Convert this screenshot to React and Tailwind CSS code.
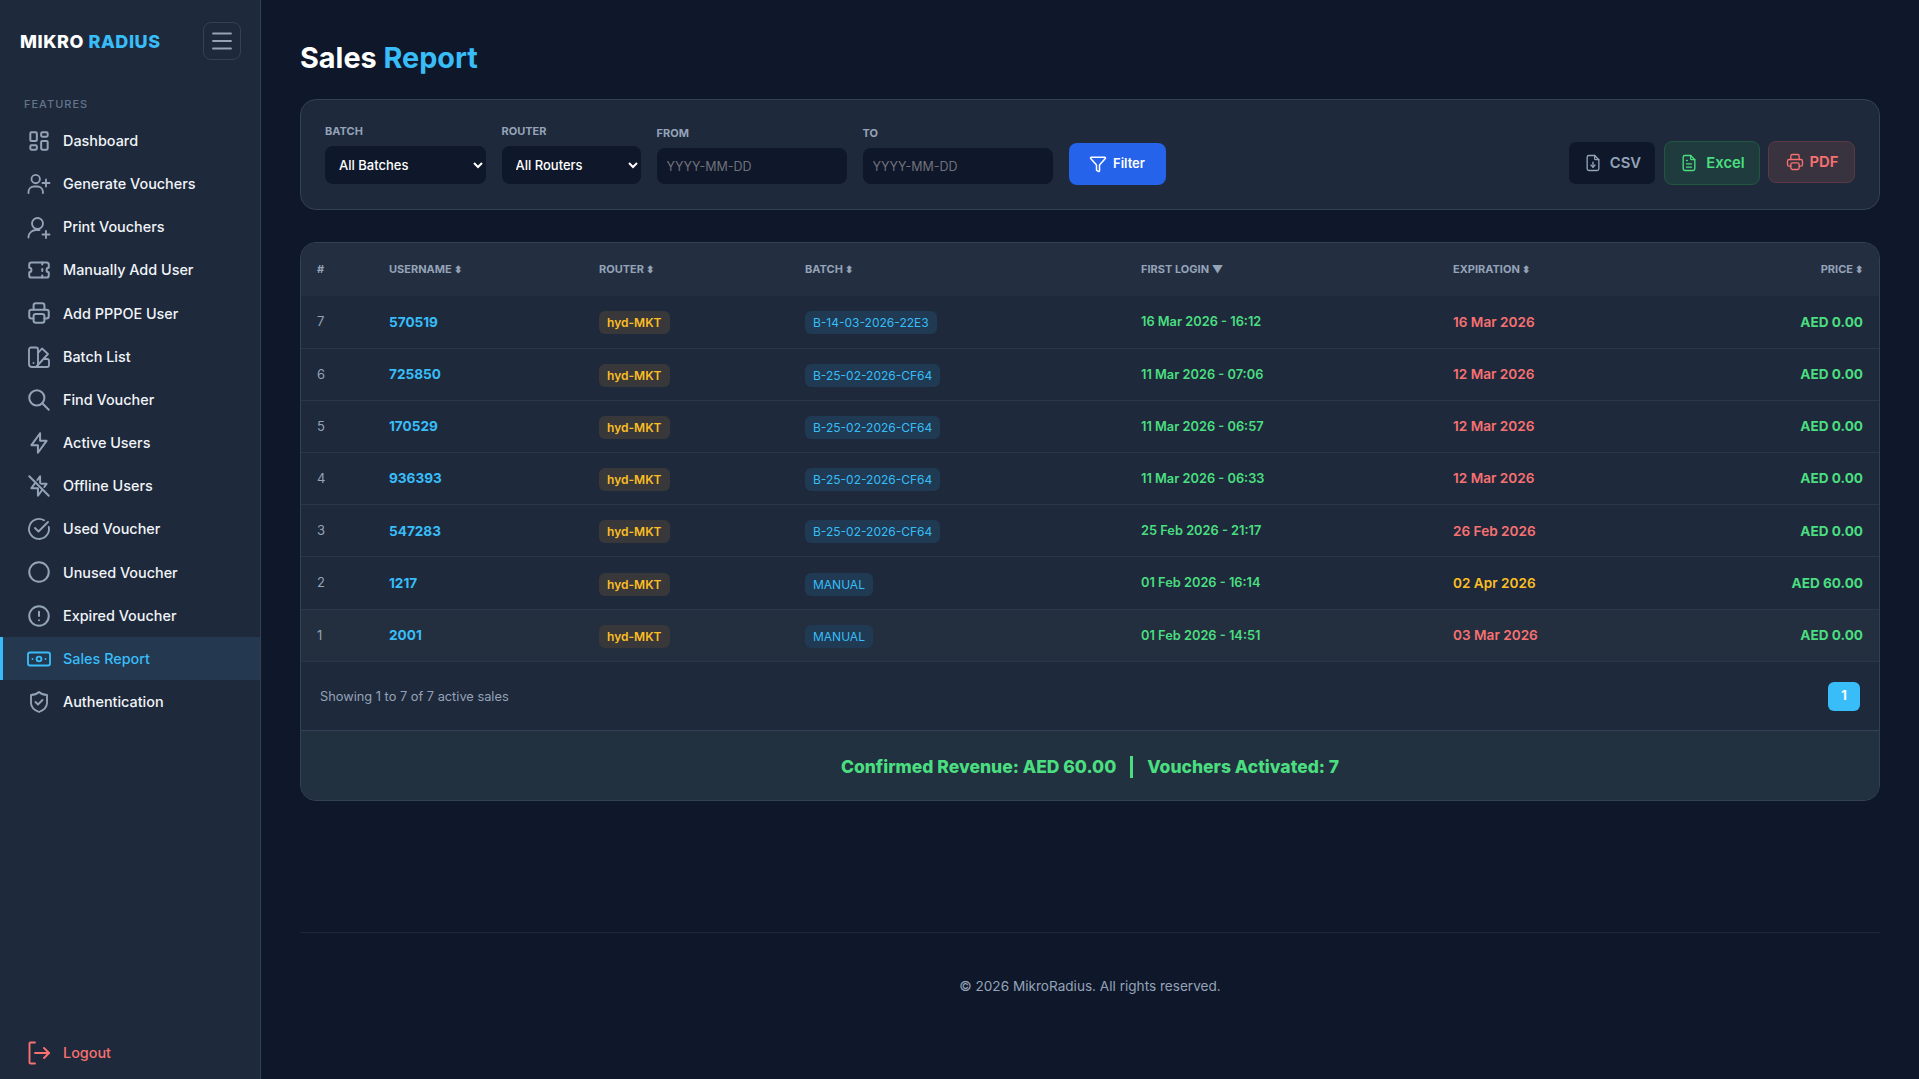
import React from 'react';
import {
  TbLayoutDashboard, TbTicket, TbPrinter, TbSearch, TbBolt, TbBoltOff,
  TbCircle, TbAlertCircle, TbFileDownload, TbFileText,
} from 'react-icons/tb';
import { Filter } from 'lucide-react';

// hand drawn icons, 24 unit paths inside a 26 unit box so they line up with the tabler ones
function Glyph({ children, ...props }) {
  return (
    <svg viewBox="-1 -1 26 26" fill="none" stroke="currentColor" strokeWidth="1.9" strokeLinecap="round" strokeLinejoin="round" {...props}>
      {children}
    </svg>
  );
}

const GenerateIcon = (props) => (
  <Glyph {...props}>
    <circle cx="8.7" cy="7" r="4.2" />
    <path d="M1.5 21v-1.5a5.5 5.5 0 0 1 5.5-5h3.4a5.5 5.5 0 0 1 5.5 5V21" />
    <path d="M15.5 11h7M19 7.5v7" />
  </Glyph>
);

const PrintIcon = (props) => (
  <Glyph {...props}>
    <circle cx="10.5" cy="8.5" r="5.5" />
    <path d="M1.5 22.5v-1a7.5 7.5 0 0 1 7.5-6.5h3.5" />
    <path d="M15.5 19.5h7M19 16v7" />
  </Glyph>
);

const BatchIcon = (props) => (
  <Glyph {...props}>
    <path d="M2 4.5a2 2 0 0 1 2-2h5a2 2 0 0 1 2 2v15.5a2 2 0 0 1-2 2H5a3 3 0 0 1-3-3z" />
    <path d="M11 8l4-4.5 6 5.5-12 13" />
    <path d="M17 14h3a2 2 0 0 1 2 2v4a2 2 0 0 1-2 2H8" />
    <path d="M6.5 18v.01" />
  </Glyph>
);

const UsedIcon = (props) => (
  <Glyph {...props}>
    <path d="M21.8 10A10 10 0 1 1 17 3.3" />
    <path d="M8 11l3.5 3.5L21 5" />
  </Glyph>
);

const CashIcon = (props) => (
  <Glyph {...props}>
    <rect x="1" y="5.5" width="22" height="13" rx="2" />
    <circle cx="12" cy="12" r="2.4" />
    <path d="M5.5 12v.01M18.5 12v.01" />
  </Glyph>
);

const ShieldIcon = (props) => (
  <Glyph {...props}>
    <path d="M12 2a12 12 0 0 0 8 3v8c0 4-3 7-8 9-5-2-8-5-8-9V5a12 12 0 0 0 8-3z" />
    <path d="M8.5 12l2.5 2.5 4.5-4.5" />
  </Glyph>
);

const LogoutIcon = (props) => (
  <Glyph {...props}>
    <path d="M8 1.5H3.5a1 1 0 0 0-1 1v19a1 1 0 0 0 1 1H8" />
    <path d="M8 12h14" />
    <path d="M17 7l5 5-5 5" />
  </Glyph>
);

const MenuIcon = (props) => (
  <svg viewBox="0 0 24 24" fill="none" stroke="currentColor" strokeWidth="1.8" strokeLinecap="round" {...props}>
    <path d="M3 4.5h18M3 12h18M3 19.5h18" />
  </svg>
);

const navItems = [
  ['Dashboard', TbLayoutDashboard],
  ['Generate Vouchers', GenerateIcon],
  ['Print Vouchers', PrintIcon],
  ['Manually Add User', TbTicket],
  ['Add PPPOE User', TbPrinter],
  ['Batch List', BatchIcon],
  ['Find Voucher', TbSearch],
  ['Active Users', TbBolt],
  ['Offline Users', TbBoltOff],
  ['Used Voucher', UsedIcon],
  ['Unused Voucher', TbCircle],
  ['Expired Voucher', TbAlertCircle],
  ['Sales Report', CashIcon, true],
  ['Authentication', ShieldIcon],
];

const sales = [
  [7, '570519', 'B-14-03-2026-22E3', '16 Mar 2026 - 16:12', '16 Mar 2026', 'AED 0.00', 'text-[#f87171]'],
  [6, '725850', 'B-25-02-2026-CF64', '11 Mar 2026 - 07:06', '12 Mar 2026', 'AED 0.00', 'text-[#f87171]'],
  [5, '170529', 'B-25-02-2026-CF64', '11 Mar 2026 - 06:57', '12 Mar 2026', 'AED 0.00', 'text-[#f87171]'],
  [4, '936393', 'B-25-02-2026-CF64', '11 Mar 2026 - 06:33', '12 Mar 2026', 'AED 0.00', 'text-[#f87171]'],
  [3, '547283', 'B-25-02-2026-CF64', '25 Feb 2026 - 21:17', '26 Feb 2026', 'AED 0.00', 'text-[#f87171]'],
  [2, '1217', 'MANUAL', '01 Feb 2026 - 16:14', '02 Apr 2026', 'AED 60.00', 'text-[#fbbf24]'],
  [1, '2001', 'MANUAL', '01 Feb 2026 - 14:51', '03 Mar 2026', 'AED 0.00', 'text-[#f87171]'],
];

function Sort() {
  return <span className="ml-[2px] text-[10px] font-black">⬍</span>;
}

function Sidebar() {
  return (
    <aside className="w-[261px] shrink-0 h-[1079px] bg-[#1e293b] border-r border-[#334155] flex flex-col">
      <div className="flex items-center justify-between pl-5 pr-[19px] pt-[22px]">
        <span className="text-[18px] font-extrabold tracking-[0.55px] text-white">
          MIKRO <span className="text-[#38bdf8]">RADIUS</span>
        </span>
        <button className="w-[38px] h-[38px] flex items-center justify-center rounded-lg border border-[#334155] text-[#94a3b8]">
          <MenuIcon className="w-[24px] h-[24px]" />
        </button>
      </div>
      <div className="pl-6 mt-[36px] mb-[7px] text-[11px] leading-[16px] font-medium tracking-[1px] text-[#64748b]">FEATURES</div>
      <nav className="flex flex-col">
        {navItems.map(([label, Icon, active]) => (
          <a
            key={label}
            className={
              active
                ? 'h-[43.2px] flex items-center gap-[11px] pl-[23px] border-l-[3px] border-[#38bdf8] bg-[#243850] text-[#38bdf8] text-[14.4px] font-medium'
                : 'h-[43.2px] flex items-center gap-[11px] pl-[26px] text-[#f1f5f9] text-[14.4px] font-medium'
            }
          >
            <Icon strokeWidth={1.85} className={active ? 'w-[26px] h-[26px]' : 'w-[26px] h-[26px] text-[#94a3b8]'} />
            {label}
          </a>
        ))}
      </nav>
      <a className="mt-auto mb-[5px] h-[43px] flex items-center gap-[11px] pl-[26px] text-[#f87171] text-[14.4px] font-medium">
        <LogoutIcon className="w-[26px] h-[26px]" />
        Logout
      </a>
    </aside>
  );
}

function FilterBar() {
  return (
    <div className="mt-[21px] h-[111px] rounded-2xl border border-[#334155] bg-[#1e293b] pl-[24px] pr-[24px] flex items-start justify-between">
      <div className="flex items-end gap-4 pt-[23px]">
        <label className="block">
          <span className="block text-[11px] leading-[16px] font-bold text-[#94a3b8] mb-[7px]">BATCH</span>
          <select className="block w-[160.5px] h-[38px] rounded-lg bg-[#0f172a] text-white text-[13px] font-medium pl-[10px] pr-1 outline-none">
            <option>All Batches</option>
          </select>
        </label>
        <label className="block">
          <span className="block text-[11px] leading-[16px] font-bold text-[#94a3b8] mb-[7px]">ROUTER</span>
          <select className="block w-[139px] h-[38px] rounded-lg bg-[#0f172a] text-white text-[13px] font-medium pl-[10px] pr-1 outline-none">
            <option>All Routers</option>
          </select>
        </label>
        <label className="block">
          <span className="block text-[11px] leading-[16px] font-bold text-[#94a3b8] mb-[7px]">FROM</span>
          <input placeholder="YYYY-MM-DD" className="block w-[190px] h-[36px] rounded-lg bg-[#0f172a] text-white text-[12.5px] px-[10px] outline-none placeholder:text-[#71717a]" />
        </label>
        <label className="block">
          <span className="block text-[11px] leading-[16px] font-bold text-[#94a3b8] mb-[7px]">TO</span>
          <input placeholder="YYYY-MM-DD" className="block w-[190px] h-[36px] rounded-lg bg-[#0f172a] text-white text-[12.5px] px-[10px] outline-none placeholder:text-[#71717a]" />
        </label>
        <button className="w-[97px] h-[42px] rounded-lg bg-[#2563eb] text-white text-[13px] font-semibold flex items-center justify-center gap-[6px] -mb-[1px]">
          <Filter className="w-[18px] h-[18px]" />
          Filter
        </button>
      </div>
      <div className="flex items-start gap-[8px] pt-[41px]">
        <button className="w-[88px] h-[44px] rounded-lg border border-[#1e293b] bg-[#0f172a] text-[#94a3b8] text-[14.8px] font-semibold flex items-center justify-center gap-[7px]">
          <TbFileDownload className="w-[20px] h-[20px]" strokeWidth={1.6} />
          CSV
        </button>
        <button className="w-[96px] h-[44px] rounded-lg border border-[#22573f] bg-[#1f3b3e] text-[#4ade80] text-[14.8px] font-semibold flex items-center justify-center gap-[7px]">
          <TbFileText className="w-[20px] h-[20px]" strokeWidth={1.6} />
          Excel
        </button>
        <button className="w-[87px] h-[42px] rounded-lg border border-[#5b3a45] bg-[#38333f] text-[#f87171] text-[14.8px] font-semibold flex items-center justify-center gap-[5px]">
          <TbPrinter className="w-[20px] h-[20px]" strokeWidth={1.6} />
          PDF
        </button>
      </div>
    </div>
  );
}

function SalesTable() {
  return (
    <div className="mt-[32px] rounded-2xl border border-[#334155] bg-[#1e293b] overflow-hidden">
      <table className="w-full table-fixed border-collapse">
        <thead>
          <tr className="h-[53px] bg-[#232e40] text-[11px] font-bold text-[#94a3b8] text-left">
            <th className="w-[72px] pl-4 font-bold">#</th>
            <th className="w-[210px] pl-4 font-bold">USERNAME<Sort /></th>
            <th className="w-[206px] pl-4 font-bold">ROUTER<Sort /></th>
            <th className="w-[336px] pl-4 font-bold">BATCH<Sort /></th>
            <th className="w-[312px] pl-4 font-bold">FIRST LOGIN <span className="text-[11px]">▼</span></th>
            <th className="pl-4 font-bold">EXPIRATION<Sort /></th>
            <th className="w-[200px] pr-4 text-right font-bold">PRICE<Sort /></th>
          </tr>
        </thead>
        <tbody>
          {sales.map(([id, user, batch, first, exp, price, expColor], i) => (
            <tr key={id} className={i === 6 ? 'h-[52.5px] border-b border-[#2b3649] bg-[#232e3e]' : 'h-[52.2px] border-b border-[#2b3649]'}>
              <td className="pl-4 text-[13px] text-[#94a3b8]">{id}</td>
              <td className="pl-4 text-[13.6px] font-bold text-[#38bdf8]">{user}</td>
              <td className="pl-4">
                <span className="inline-block h-[23px] leading-[23px] px-2 rounded-md bg-[#38383a] text-[#fbbf24] text-[12px] font-semibold">hyd-MKT</span>
              </td>
              <td className="pl-4">
                <span className="inline-block h-[23px] leading-[23px] px-2 rounded-md bg-[#1f3a52] text-[#38bdf8] text-[12px]">{batch}</span>
              </td>
              <td className="pl-4 text-[12.8px] font-semibold text-[#4ade80]">{first}</td>
              <td className={'pl-4 text-[13.6px] font-semibold ' + expColor}>{exp}</td>
              <td className="pr-4 text-right text-[13.6px] font-bold text-[#4ade80]">{price}</td>
            </tr>
          ))}
        </tbody>
      </table>
      <div className="h-[68px] flex items-center justify-between pl-[19px] pr-[19px]">
        <span className="text-[12.8px] text-[#94a3b8]">Showing 1 to 7 of 7 active sales</span>
        <button className="w-[32px] h-[29px] rounded-md bg-[#38bdf8] text-white text-[13px] font-bold">1</button>
      </div>
      <div className="h-[70px] pt-[2px] border-t border-[#334155] bg-[#22313f] flex items-center justify-center gap-[14px] text-[17.5px] font-extrabold text-[#4ade80]">
        <span>Confirmed Revenue: AED 60.00</span>
        <span className="w-[3px] h-[22px] bg-[#4ade80]" />
        <span>Vouchers Activated: 7</span>
      </div>
    </div>
  );
}

export default function App() {
  return (
    <div className="flex h-[1079px] overflow-hidden bg-[#0f172a] font-['Inter',sans-serif]">
      <Sidebar />
      <main className="flex-1 min-w-0 pl-[39px] pr-[39px] pt-[37px]">
        <h1 className="text-[28.8px] leading-[41px] font-bold text-white">
          Sales <span className="text-[#38bdf8]">Report</span>
        </h1>
        <FilterBar />
        <SalesTable />
        <footer className="mt-[131px] border-t border-[#1e293b] pt-[43px] text-center text-[13.6px] text-[#94a3b8]">
          © 2026 MikroRadius. All rights reserved.
        </footer>
      </main>
    </div>
  );
}
